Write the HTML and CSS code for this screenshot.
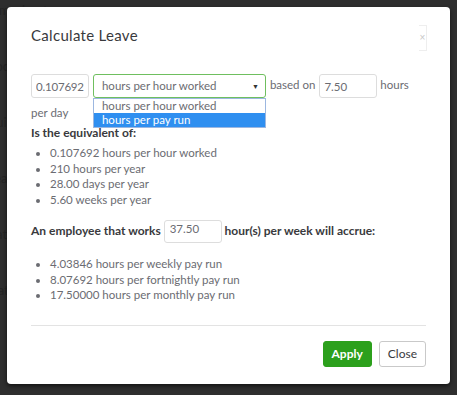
FILE: index.html
```html
<!DOCTYPE html>
<html>
<head>
    <title>Calculate Leave</title>
    <link rel="stylesheet" href="styles.css">
</head>
<body>
    <div class="page">
        <p>Timesheets</p>
        <p>Pocket</p>
        <p>Build</p>
        <p>Leave</p>
        <p>Rate</p>
        <p>Data</p>
    </div>

    <div class="modal">
        <div class="modal-header">
            <h3>Calculate Leave</h3>
            <button class="close-x">&times;</button>
        </div>

        <div class="modal-body">
            <div class="rate-row">
                <input type="text" class="field field-rate" value="0.107692">
                <span class="select-wrap">
                    <span class="select">hours per hour worked<span class="caret">&#9660;</span></span>
                    <ul class="options">
                        <li>hours per hour worked</li>
                        <li class="active">hours per pay run</li>
                    </ul>
                </span>
                based on
                <input type="text" class="field field-hours" value="7.50">
                hours per day
            </div>

            <p class="label">Is the equivalent of:</p>
            <ul class="results">
                <li>0.107692 hours per hour worked</li>
                <li>210 hours per year</li>
                <li>28.00 days per year</li>
                <li>5.60 weeks per year</li>
            </ul>

            <p class="label week-row">An employee that works <input type="text" class="field field-week" value="37.50"> hour(s) per week will accrue:</p>
            <ul class="results">
                <li>4.03846 hours per weekly pay run</li>
                <li>8.07692 hours per fortnightly pay run</li>
                <li>17.50000 hours per monthly pay run</li>
            </ul>
        </div>

        <div class="modal-footer">
            <button class="btn btn-apply">Apply</button>
            <button class="btn btn-close">Close</button>
        </div>
    </div>
</body>
</html>
```

FILE: styles.css
```css
body {
    margin: 0;
    height: 395px;
    overflow: hidden;
    background-color: #2e2e2e;
    font-family: Lato, "Open Sans", sans-serif;
}

.page {
    padding: 2px 0 0 0;
    color: #242424;
    font-size: 13px;
}

.page p {
    margin: 0 0 40px 0;
    text-indent: -12px;
}

.modal {
    position: absolute;
    left: 7px;
    top: 7px;
    width: 443px;
    height: 377px;
    background-color: #fff;
    border-radius: 4px;
    box-shadow: 0 2px 4px rgba(0, 0, 0, 0.6);
    box-sizing: border-box;
    padding: 0 24px;
}

.modal-header {
    display: flex;
    justify-content: space-between;
    align-items: flex-start;
    height: 64px;
}

.modal-header h3 {
    margin: 19px 0 0 0;
    font-size: 15px;
    font-weight: normal;
    color: #393a3d;
    letter-spacing: 0.3px;
}

.close-x {
    margin-top: 18px;
    margin-right: -1px;
    width: 8px;
    height: 26px;
    padding: 0;
    border: 1px solid #eee;
    border-left: none;
    background: #fff;
    color: #c8c8c8;
    font-size: 10px;
    line-height: 24px;
}

.modal-body {
    font-size: 11.5px;
    color: #6b6c72;
}

.rate-row {
    line-height: 28px;
}

.field {
    box-sizing: border-box;
    height: 24px;
    border: 1px solid #ddd;
    border-radius: 3px;
    padding: 0 4px;
    font-family: inherit;
    font-size: 11.5px;
    color: #6b6c72;
    vertical-align: middle;
}

.field-rate {
    width: 58px;
    padding: 0 1px 0 4px;
    letter-spacing: -0.2px;
}

.field-hours {
    width: 58px;
    margin-left: 1px;
}

.select-wrap {
    position: relative;
    display: inline-block;
    vertical-align: middle;
    margin: 0 1px;
}

.select {
    display: block;
    box-sizing: border-box;
    width: 173px;
    height: 24px;
    line-height: 22px;
    padding: 0 8px;
    border: 1px solid #6fbf5f;
    border-radius: 3px;
    position: relative;
}

.caret {
    position: absolute;
    right: 6px;
    top: 0;
    font-size: 7px;
    color: #333;
}

.options {
    position: absolute;
    left: 0;
    top: 24px;
    width: 173px;
    box-sizing: border-box;
    margin: 0;
    padding: 0;
    list-style: none;
    background: #fff;
    border: 1px solid #9cb7e0;
    z-index: 2;
    line-height: 14px;
}

.options li {
    padding: 0 8px;
}

.options li.active {
    background-color: #2f8ff0;
    color: #fff;
}

.label {
    margin: -2px 0 0 0;
    font-size: 12px;
    font-weight: bold;
    color: #393a3d;
    line-height: 16px;
}

.results {
    margin: 4px 0 0 0;
    padding: 0 0 0 19px;
    line-height: 15.7px;
}

.week-row {
    margin-top: 12px;
}

.field-week {
    width: 58px;
    height: 23px;
    padding: 0 0 6px 5px;
}

.week-row + .results {
    margin-top: 13px;
}

.modal-footer {
    margin-top: 22px;
    border-top: 1px solid #e3e3e3;
    padding-top: 15px;
    display: flex;
    justify-content: flex-end;
    gap: 7px;
}

.btn {
    height: 26px;
    border-radius: 3px;
    font-family: inherit;
    font-size: 12px;
    padding: 0 8px;
    cursor: pointer;
}

.btn-apply {
    background-color: #2ca01c;
    border: 1px solid #2ca01c;
    color: #fff;
    font-weight: bold;
}

.btn-close {
    background-color: #fff;
    border: 1px solid #c9c9c9;
    color: #393a3d;
}
```
